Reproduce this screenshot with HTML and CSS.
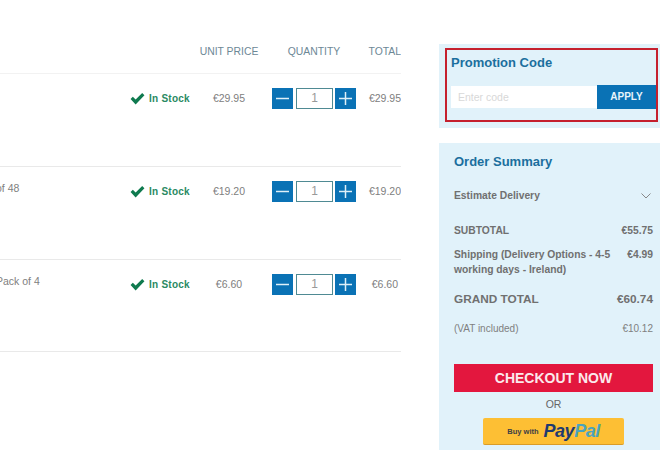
FILE: index.html
```html
<!DOCTYPE html>
<html lang="en">
<head>
<meta charset="utf-8">
<title>Basket</title>
<link rel="stylesheet" href="styles.css">
</head>
<body>
<div class="page">
  <main class="basket">
    <div class="row head">
      <span></span><span></span>
      <span class="c-price">UNIT PRICE</span>
      <span class="c-qty">QUANTITY</span>
      <span class="c-total">TOTAL</span>
    </div>
    <div class="row item">
      <span class="name"></span>
      <span class="stock"><svg class="tick" viewBox="0 0 16 13"><path d="M.6 7l2.4-2.4 3 3L13 .6l2.4 2.4L6 12.8z"/></svg>In Stock</span>
      <span class="c-price">€29.95</span>
      <div class="qty"><span class="btn"><svg viewBox="0 0 21 21"><path d="M4 10.5h13"/></svg></span><span class="val">1</span><span class="btn"><svg viewBox="0 0 21 21"><path d="M4 10.5h13M10.5 4v13"/></svg></span></div>
      <span class="c-total">€29.95</span>
    </div>
    <div class="row item">
      <span class="name">of 48</span>
      <span class="stock"><svg class="tick" viewBox="0 0 16 13"><path d="M.6 7l2.4-2.4 3 3L13 .6l2.4 2.4L6 12.8z"/></svg>In Stock</span>
      <span class="c-price">€19.20</span>
      <div class="qty"><span class="btn"><svg viewBox="0 0 21 21"><path d="M4 10.5h13"/></svg></span><span class="val">1</span><span class="btn"><svg viewBox="0 0 21 21"><path d="M4 10.5h13M10.5 4v13"/></svg></span></div>
      <span class="c-total">€19.20</span>
    </div>
    <div class="row item last">
      <span class="name">Pack of 4</span>
      <span class="stock"><svg class="tick" viewBox="0 0 16 13"><path d="M.6 7l2.4-2.4 3 3L13 .6l2.4 2.4L6 12.8z"/></svg>In Stock</span>
      <span class="c-price">€6.60</span>
      <div class="qty"><span class="btn"><svg viewBox="0 0 21 21"><path d="M4 10.5h13"/></svg></span><span class="val">1</span><span class="btn"><svg viewBox="0 0 21 21"><path d="M4 10.5h13M10.5 4v13"/></svg></span></div>
      <span class="c-total">€6.60</span>
    </div>
  </main>
  <aside class="side">
    <section class="promo">
      <div class="promo-box">
        <h2 class="promo-title">Promotion Code</h2>
        <div class="promo-form">
          <span class="promo-input">Enter code</span>
          <span class="apply">APPLY</span>
        </div>
      </div>
    </section>
    <section class="summary">
      <h2 class="sum-title">Order Summary</h2>
      <div class="estimate"><span>Estimate Delivery</span><svg class="chev" viewBox="0 0 10 6"><path d="M.5.5L5 5 9.5.5"/></svg></div>
      <div class="line sub"><span>SUBTOTAL</span><span>€55.75</span></div>
      <div class="line ship"><span>Shipping (Delivery Options - 4-5 working days - Ireland)</span><span>€4.99</span></div>
      <div class="line grand"><span>GRAND TOTAL</span><span>€60.74</span></div>
      <div class="line vat"><span>(VAT included)</span><span>€10.12</span></div>
      <div class="checkout">CHECKOUT NOW</div>
      <div class="or">OR</div>
      <div class="paypal"><span class="buy">Buy with</span><span class="pp"><span class="pay">Pay</span><span class="pal">Pal</span></span></div>
    </section>
  </aside>
</div>
</body>
</html>
```
FILE: styles.css
```css
* { box-sizing: border-box; }
html, body { margin: 0; padding: 0; }
body {
  width: 660px;
  height: 450px;
  overflow: hidden;
  background: #fff;
  font-family: "Liberation Sans", Arial, sans-serif;
  color: #666;
}
h2 { margin: 0; }
.page { display: flex; align-items: flex-start; gap: 38px; height: 450px; overflow: hidden; }
.basket { width: 401px; flex: none; overflow: hidden; }
.row {
  display: grid;
  grid-template-columns: 130px 63px 72px 91px 45px;
  align-items: start;
  border-bottom: 1px solid #e9e9e9;
}
.head { height: 74px; padding-top: 46px; font-size: 10.4px; color: #6d8896; border-bottom-color: #f2f2f2; line-height: 12px; }
.head span { white-space: nowrap; }
.head .c-qty { text-align: center; padding-left: 7px; }
.item { height: 93px; padding-top: 14px; font-size: 10.5px; line-height: 21px; color: #808080; }
.last { height: 92px; }
.last .c-total { padding-right: 3px; }
.name { font-size: 10.5px; line-height: 12px; padding-top: 1px; margin-left: -4px; color: #808080; white-space: nowrap; }
.stock { display: flex; align-items: center; gap: 4px; height: 21px; font-size: 10px; font-weight: bold; color: #2a8a63; letter-spacing: .25px; white-space: nowrap; }
.tick { width: 15px; height: 13px; fill: #0f7a4f; flex: none; }
.c-price { text-align: center; white-space: nowrap; }
.c-total { text-align: right; white-space: nowrap; }
.qty { display: flex; justify-content: flex-end; gap: 3px; }
.btn { width: 21px; height: 21px; background: #0a72b5; display: block; }
.btn svg { display: block; width: 21px; height: 21px; fill: none; stroke: #dff0f8; stroke-width: 1.5; }
.val { width: 37px; height: 21px; margin-right: -1px; border: 1px solid #4f8a93; text-align: center; font-size: 12px; line-height: 19px; color: #999; }
.side { width: 221px; flex: none; padding-top: 44px; }
.promo { height: 84px; background: #e1f2fa; padding: 4px 2px 0 6px; }
.promo-box { height: 74px; border: 2px solid #c5202e; padding: 4px 0 0 4px; }
.promo-title { font-size: 13px; line-height: 18px; color: #1b6f9e; font-weight: bold; }
.promo-form { display: flex; align-items: center; margin-top: 13px; }
.promo-input { width: 146px; height: 22px; background: #fff; font-size: 10.5px; line-height: 22px; padding-left: 7px; color: #d8d8d8; }
.apply { width: 59px; height: 24px; background: #0a72b5; color: #e8f4fa; font-size: 10px; font-weight: bold; line-height: 24px; text-align: center; }
.summary { margin-top: 15px; height: 320px; background: #e1f2fa; padding: 10px 7px 0 15px; }
.sum-title { font-size: 13px; line-height: 17px; color: #1b6f9e; font-weight: bold; }
.estimate { display: flex; justify-content: space-between; align-items: center; margin-top: 19px; font-size: 10.3px; font-weight: bold; line-height: 14px; color: #707070; padding-right: 2px; }
.chev { width: 10px; height: 6px; fill: none; stroke: #888; stroke-width: 1; }
.line { display: flex; justify-content: space-between; gap: 14px; }
.line span:last-child { white-space: nowrap; }
.sub { margin-top: 21px; font-size: 10.3px; font-weight: bold; line-height: 14px; color: #707070; }
.ship { margin-top: 10px; font-size: 10.3px; font-weight: bold; line-height: 14.5px; color: #707070; }
.grand { margin-top: 14px; font-size: 11.8px; font-weight: bold; line-height: 16px; color: #707070; }
.vat { margin-top: 15px; font-size: 10px; line-height: 14px; color: #808080; }
.checkout { margin-top: 28px; height: 28px; background: #e3173e; color: #fbe9ec; font-size: 14px; font-weight: bold; line-height: 28px; text-align: center; }
.or { margin-top: 6px; font-size: 10.5px; line-height: 13px; text-align: center; color: #666; }
.paypal { width: 141px; height: 27px; margin: 7px 0 0 29px; background: #fdbf34; border-radius: 2px; border-bottom: 1px solid #d99c28; display: flex; align-items: center; justify-content: center; gap: 5px; }
.buy { font-size: 7.5px; font-weight: bold; color: #3c4046; }
.pp { font-size: 18px; font-weight: bold; font-style: italic; letter-spacing: -.5px; line-height: 20px; }
.pay { color: #1f3a70; }
.pal { color: #4aa3bd; }
```
